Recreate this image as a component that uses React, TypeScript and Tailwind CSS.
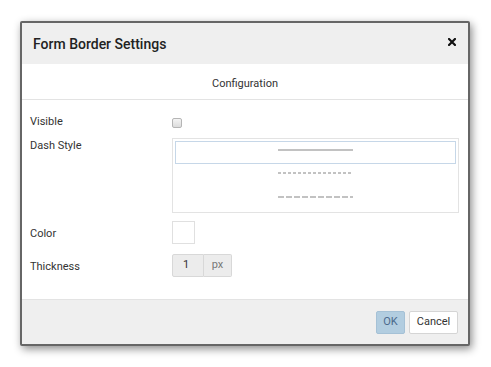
export default function App() {
  return (
    <div className="w-[491px] h-[367px] bg-white pt-[21px] pl-[20px] font-['Roboto',sans-serif] text-[#333]">
      <div className="w-[450px] h-[325px] border-2 border-[#666] rounded-[2px] bg-white shadow-[2px_3px_8px_rgba(0,0,0,0.45)] flex flex-col overflow-hidden">
        {/* Header */}
        <div className="h-[41px] shrink-0 bg-[#efefef] flex items-center justify-between pl-[11px] pr-[12px]">
          <span className="text-[14px] font-medium text-[#222] leading-none">Form Border Settings</span>
          <svg width="8" height="8" viewBox="0 0 8 8" className="mt-[-4px]">
            <path d="M1 1L7 7M7 1L1 7" stroke="#111" strokeWidth="2.2" strokeLinecap="square" />
          </svg>
        </div>

        {/* Tab */}
        <div className="h-[36px] shrink-0 border-b border-[#e3e3e3] flex items-center justify-center pt-[5px] text-[11px] text-[#333]">
          Configuration
        </div>

        {/* Body */}
        <div className="flex-1 flex flex-col pt-[12px] pl-[8px] text-[11px] text-[#333]">
          <div className="h-[18px] flex items-center">
            <span className="w-[142px] pt-[2px]">Visible</span>
            <span className="mt-[4px] w-[10px] h-[10px] rounded-[2px] border border-[#b5b5b5] bg-gradient-to-b from-[#f4f4f4] to-[#dcdcdc]" />
          </div>

          <div className="mt-[8px] flex items-start">
            <span className="w-[142px] leading-[14px] pt-[1px]">Dash Style</span>
            <div className="w-[287px] h-[75px] border border-[#e3e3e3] p-[2px] flex flex-col">
              <div className="h-[23px] border border-[#c6d7e8] flex justify-center pt-[7px]">
                <svg width="75" height="2"><line x1="0" y1="1" x2="75" y2="1" stroke="#c2c2c2" strokeWidth="2" /></svg>
              </div>
              <div className="h-[23px] flex justify-center pt-[8px]">
                <svg width="75" height="2"><line x1="0" y1="1" x2="75" y2="1" stroke="#c2c2c2" strokeWidth="2" strokeDasharray="3 2" /></svg>
              </div>
              <div className="h-[23px] flex justify-center pt-[9px]">
                <svg width="75" height="2"><line x1="0" y1="1" x2="75" y2="1" stroke="#c2c2c2" strokeWidth="2" strokeDasharray="6 2" /></svg>
              </div>
            </div>
          </div>

          <div className="mt-[8px] h-[23px] flex items-center">
            <span className="w-[142px] pt-[3px]">Color</span>
            <div className="w-[23px] h-[23px] border border-[#e0e0e0] bg-white" />
          </div>

          <div className="mt-[10px] h-[23px] flex items-center">
            <span className="w-[142px] pt-[3px]">Thickness</span>
            <div className="flex h-[23px]">
              <div className="w-[32px] h-full border border-[#d8d8d8] rounded-l-[2px] bg-[#ececec] flex items-center pl-[10px] text-[#333]">1</div>
              <div className="w-[28px] h-full border border-l-0 border-[#d8d8d8] rounded-r-[2px] bg-[#ececec] flex items-center justify-center text-[#777]">px</div>
            </div>
          </div>
        </div>

        {/* Footer */}
        <div className="h-[45px] shrink-0 bg-[#efefef] border-t border-[#e3e3e3] flex items-start justify-end gap-[4px] pt-[11px] pr-[10px] text-[11px]">
          <button className="h-[23px] w-[29px] rounded-[2px] bg-[#b2cde0] border border-[#a5c1d6] text-[#4a6a8c] flex items-center justify-center">OK</button>
          <button className="h-[23px] w-[49px] rounded-[2px] bg-white border border-[#d5d5d5] text-[#333] flex items-center justify-center">Cancel</button>
        </div>
      </div>
    </div>
  );
}
